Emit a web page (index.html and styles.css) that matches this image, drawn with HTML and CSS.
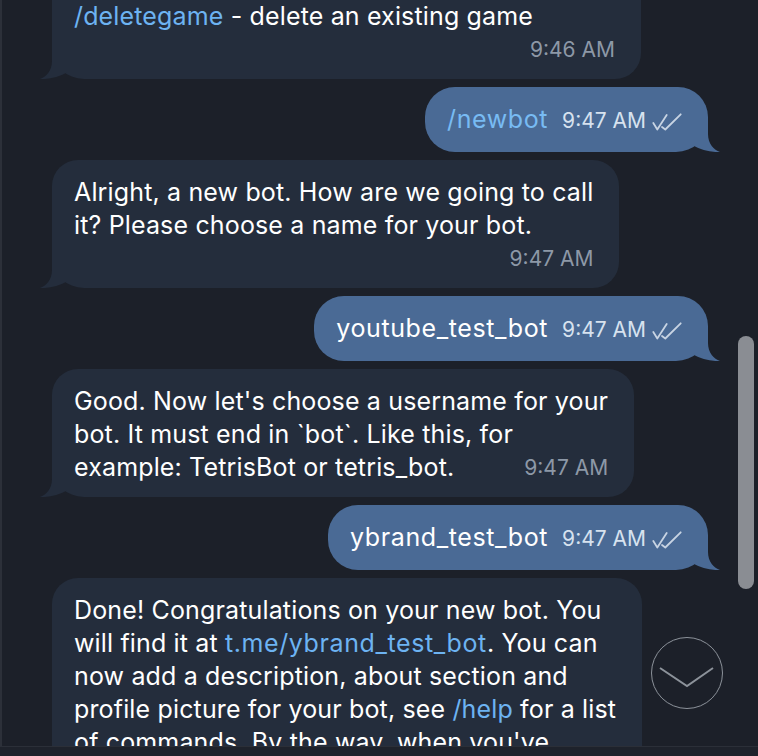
FILE: index.html
```html
<!DOCTYPE html>
<html lang="en">
<head>
    <meta charset="UTF-8">
    <meta name="viewport" content="width=device-width, initial-scale=1.0">
    <title>BotFather</title>
    <link rel="stylesheet" href="styles.css">
</head>
<body>
    <div class="window">
        <div class="chat">
            <div class="messages">

                <div class="msg in help">
                    <div class="text">
                        <a class="cmd">/editgame</a> - edit a game<br>
                        <a class="cmd">/deletegame</a> - delete an existing game
                    </div>
                    <div class="time-row"><span class="time">9:46 AM</span></div>
                    <svg class="tail" width="30" height="32" viewBox="0 0 30 32"><path d="M12,0 L12,14 C12,24 6,30 0,32 C9,32.5 19,30 27,25.5 L27,0 Z"/></svg>
                </div>

                <div class="msg out">
                    <div class="line">
                        <a class="cmd">/newbot</a>
                        <span class="time">9:47 AM</span>
                        <svg class="ticks" width="30" height="18" viewBox="0 0 30 18"><path d="M1.3,10 L5.3,16.5 L14.7,2"/><path d="M10,14 L13.3,16.5 L28.7,1.3"/></svg>
                    </div>
                    <svg class="tail" width="30" height="32" viewBox="0 0 30 32"><path d="M12,0 L12,14 C12,24 6,30 0,32 C9,32.5 19,30 27,25.5 L27,0 Z"/></svg>
                </div>

                <div class="msg in">
                    <div class="text">
                        Alright, a new bot. How are we going to call<br>
                        it? Please choose a name for your bot.
                    </div>
                    <div class="time-row"><span class="time">9:47 AM</span></div>
                    <svg class="tail" width="30" height="32" viewBox="0 0 30 32"><path d="M12,0 L12,14 C12,24 6,30 0,32 C9,32.5 19,30 27,25.5 L27,0 Z"/></svg>
                </div>

                <div class="msg out">
                    <div class="line">
                        <span>youtube_test_bot</span>
                        <span class="time">9:47 AM</span>
                        <svg class="ticks" width="30" height="18" viewBox="0 0 30 18"><path d="M1.3,10 L5.3,16.5 L14.7,2"/><path d="M10,14 L13.3,16.5 L28.7,1.3"/></svg>
                    </div>
                    <svg class="tail" width="30" height="32" viewBox="0 0 30 32"><path d="M12,0 L12,14 C12,24 6,30 0,32 C9,32.5 19,30 27,25.5 L27,0 Z"/></svg>
                </div>

                <div class="msg in">
                    <div class="text">
                        Good. Now let's choose a username for your<br>
                        bot. It must end in `bot`. Like this, for
                    </div>
                    <div class="last-line">
                        <span>example: TetrisBot or tetris_bot.</span>
                        <span class="time">9:47 AM</span>
                    </div>
                    <svg class="tail" width="30" height="32" viewBox="0 0 30 32"><path d="M12,0 L12,14 C12,24 6,30 0,32 C9,32.5 19,30 27,25.5 L27,0 Z"/></svg>
                </div>

                <div class="msg out">
                    <div class="line">
                        <span>ybrand_test_bot</span>
                        <span class="time">9:47 AM</span>
                        <svg class="ticks" width="30" height="18" viewBox="0 0 30 18"><path d="M1.3,10 L5.3,16.5 L14.7,2"/><path d="M10,14 L13.3,16.5 L28.7,1.3"/></svg>
                    </div>
                    <svg class="tail" width="30" height="32" viewBox="0 0 30 32"><path d="M12,0 L12,14 C12,24 6,30 0,32 C9,32.5 19,30 27,25.5 L27,0 Z"/></svg>
                </div>

                <div class="msg in">
                    <div class="text">
                        Done! Congratulations on your new bot. You<br>
                        will find it at <a class="cmd link">t.me/ybrand_test_bot</a>. You can<br>
                        now add a description, about section and<br>
                        profile picture for your bot, see <a class="cmd">/help</a> for a list<br>
                        of commands. By the way, when you've<br>
                        finished creating your cool bot, ping our<br>
                        Bot Support if you want a better username
                    </div>
                </div>

            </div>

            <div class="scrollbar"></div>

            <button class="to-bottom">
                <svg width="72" height="72" viewBox="0 0 72 72"><polyline points="9,31 36,49 62,31"/></svg>
            </button>
        </div>
        <div class="composer"></div>
    </div>
</body>
</html>
```

FILE: styles.css
```css
/* Reset */
* {
    margin: 0;
    padding: 0;
    box-sizing: border-box;
}

body {
    font-family: "Inter", "Noto Sans", sans-serif;
    background-color: #1c2029;
    color: #fff;
    overflow: hidden;
}

.window {
    width: 758px;
    height: 756px;
    display: flex;
    flex-direction: column;
}

.chat {
    position: relative;
    height: 746px;
    overflow: hidden;
    border-left: 2px solid #2c3039;
}

.composer {
    flex: 1;
    background-color: #1e222b;
    border-top: 1px solid #2b2f38;
}

/* Message list */
.messages {
    display: flex;
    flex-direction: column;
    gap: 8px;
    margin-top: -49px;
    padding: 0 50px;
}

.msg {
    position: relative;
    width: fit-content;
    font-size: 25px;
    line-height: 33px;
    letter-spacing: 0.15px;
    padding: 16px 24px 13px 22px;
    border-radius: 26px;
}

.msg.in {
    align-self: flex-start;
    background-color: #242d3c;
    border-bottom-left-radius: 32px;
    padding-right: 26px;
}

.msg.help {
    width: 589px;
}

.msg.out {
    align-self: flex-end;
    background-color: #4a6a95;
    border-radius: 30px;
    border-bottom-right-radius: 32px;
    padding-right: 26px;
    padding-bottom: 15px;
    letter-spacing: 0.6px;
}

.tail {
    position: absolute;
    bottom: 0;
    left: -12px;
}

.msg.in .tail path {
    fill: #242d3c;
}

.msg.out .tail {
    left: auto;
    right: -12px;
    transform: scaleX(-1);
}

.msg.out .tail path {
    fill: #4a6a95;
}

.cmd {
    color: #6db3f2;
    text-decoration: none;
}

.cmd.link {
    letter-spacing: 0.6px;
}

.msg.out .cmd {
    color: #78bbf3;
}

.time {
    font-size: 21px;
    letter-spacing: 0;
    color: #8d98a7;
    white-space: nowrap;
}

.time-row {
    margin-top: 1px;
    font-size: 21px;
    line-height: 32px;
    text-align: right;
}

.last-line {
    display: flex;
    justify-content: space-between;
    gap: 24px;
}

.line {
    display: flex;
    align-items: baseline;
}

.msg.out .time {
    color: #d7e2ef;
    margin-left: 14px;
}

.ticks {
    margin-left: 6px;
    align-self: center;
    margin-top: 4px;
}

.ticks path {
    fill: none;
    stroke: #c8d4e3;
    stroke-width: 1.8;
    stroke-linecap: round;
    stroke-linejoin: round;
}

/* Overlays */
.scrollbar {
    position: absolute;
    top: 336px;
    left: 736px;
    width: 16px;
    height: 253px;
    border-radius: 8px;
    background-color: #8a8d93;
}

.to-bottom {
    position: absolute;
    top: 637px;
    left: 649px;
    width: 72px;
    height: 72px;
    border-radius: 50%;
    border: 1.5px solid #8c929a;
    background-color: #1c2029;
    cursor: pointer;
}

.to-bottom svg {
    position: absolute;
    top: -1.5px;
    left: -1.5px;
}

.to-bottom polyline {
    fill: none;
    stroke: #8c929a;
    stroke-width: 2;
}
```
